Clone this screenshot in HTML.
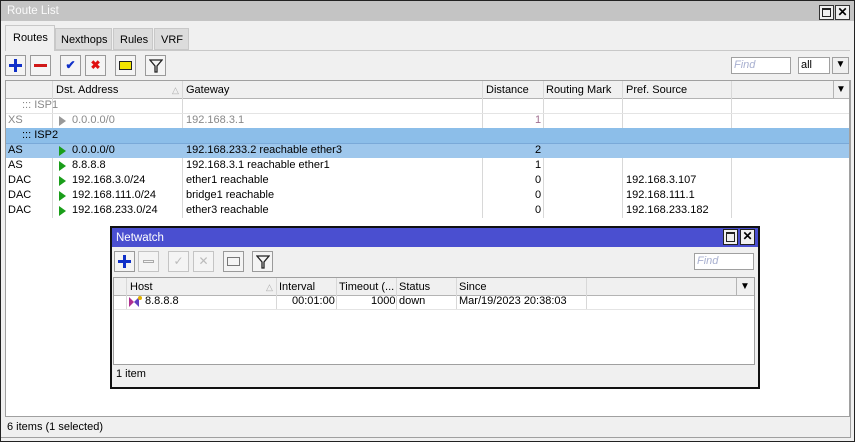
<!DOCTYPE html>
<html><head><style>
*{box-sizing:border-box;margin:0;padding:0}
body{width:855px;height:442px;background:#f0f0f0;font:11px "Liberation Sans",sans-serif;color:#000;position:relative;overflow:hidden}
.a{position:absolute}
.t{position:absolute;white-space:nowrap;line-height:15px}
.btn{position:absolute;width:21px;height:21px;border:1px solid #9a9a9a;background:#f4f4f4}
.hd{position:absolute;height:18px;background:#f0f0f0;border-bottom:1px solid #b4b4b4}
.vl{position:absolute;width:1px;background:#d8d8d8}
.hl{position:absolute;height:1px;background:#e4e4e4}
.tri{position:absolute;width:0;height:0;border-top:5px solid transparent;border-bottom:5px solid transparent;border-left:7px solid #1a9e1a}
</style></head><body>
<div class="a" style="left:0;top:0;width:855px;height:442px;border:1px solid #222"></div>
<div class="a" style="left:1px;top:1px;width:853px;height:20px;background:#c4c4c4"></div>
<div class="t" style="left:7px;top:4px;font-size:11.5px;color:#fafafa">Route List</div>
<div class="a" style="left:819px;top:5px;width:15px;height:15px;border:1px solid #333;background:#f0f0f0"><div class="a" style="left:2px;top:2px;width:9px;height:9px;border:1px solid #222;border-top-width:2px"></div></div>
<div class="a" style="left:835px;top:5px;width:15px;height:15px;border:1px solid #333;background:#f0f0f0;font:bold 12px 'Liberation Sans';text-align:center;line-height:12px">✕</div>
<div class="a" style="left:5px;top:50px;width:845px;height:1px;background:#c8c8c8"></div>
<div class="a" style="left:55px;top:28px;width:57px;height:22px;background:#dcdcdc;border:1px solid #c8c8c8"></div>
<div class="a" style="left:113px;top:28px;width:40px;height:22px;background:#dcdcdc;border:1px solid #c8c8c8"></div>
<div class="a" style="left:154px;top:28px;width:35px;height:22px;background:#dcdcdc;border:1px solid #c8c8c8"></div>
<div class="a" style="left:5px;top:25px;width:50px;height:26px;background:#f0f0f0;border:1px solid #c8c8c8;border-bottom:none"></div>
<div class="t" style="left:13px;top:31px">Routes</div>
<div class="t" style="left:61px;top:33px">Nexthops</div>
<div class="t" style="left:120px;top:33px">Rules</div>
<div class="t" style="left:161px;top:33px">VRF</div>
<div class="btn" style="left:5px;top:55px"><div class="a" style="left:3px;top:8px;width:13px;height:3px;background:#1030c8"></div><div class="a" style="left:8px;top:3px;width:3px;height:13px;background:#1030c8"></div></div>
<div class="btn" style="left:30px;top:55px"><div class="a" style="left:3px;top:8px;width:13px;height:3px;background:#d01818"></div></div>
<div class="btn" style="left:60px;top:55px;color:#1030c8;font-weight:bold;text-align:center;line-height:18px;font-size:12px">✔</div>
<div class="btn" style="left:85px;top:55px;color:#e01010;font-weight:bold;text-align:center;line-height:18px;font-size:12px">✖</div>
<div class="btn" style="left:115px;top:55px"><div class="a" style="left:3px;top:5px;width:13px;height:9px;background:#f2e400;border:1px solid #222"></div></div>
<div class="btn" style="left:145px;top:55px"><svg class="a" style="left:3px;top:3px" width="14" height="14"><path d="M1 1H13L8 7V13H6V7Z" fill="none" stroke="#222" stroke-width="1.3"/></svg></div>
<div class="a" style="left:731px;top:57px;width:60px;height:17px;background:#fff;border:1px solid #a0a0a0"></div>
<div class="t" style="left:734px;top:58px;color:#a8b0d0;font-style:italic">Find</div>
<div class="a" style="left:798px;top:57px;width:32px;height:17px;background:#fff;border:1px solid #a0a0a0"></div>
<div class="t" style="left:801px;top:58px">all</div>
<div class="a" style="left:832px;top:57px;width:17px;height:17px;border:1px solid #a0a0a0;text-align:center;font-size:10px;line-height:14px">▼</div>
<div class="a" style="left:5px;top:80px;width:845px;height:337px;background:#fff;border:1px solid #a0a0a0"></div>
<div class="hd" style="left:6px;top:81px;width:843px"></div>
<div class="vl" style="left:52px;top:81px;height:137px"></div>
<div class="vl" style="left:182px;top:81px;height:137px"></div>
<div class="vl" style="left:482px;top:81px;height:137px"></div>
<div class="vl" style="left:543px;top:81px;height:137px"></div>
<div class="vl" style="left:622px;top:81px;height:137px"></div>
<div class="vl" style="left:731px;top:81px;height:137px"></div>
<div class="vl" style="left:833px;top:81px;height:18px;background:#b4b4b4"></div>
<div class="t" style="left:56px;top:83px">Dst. Address</div>
<div class="t" style="left:172px;top:83px;color:#aaa;font-size:9px">△</div>
<div class="t" style="left:186px;top:83px">Gateway</div>
<div class="t" style="left:486px;top:83px">Distance</div>
<div class="t" style="left:546px;top:83px">Routing Mark</div>
<div class="t" style="left:626px;top:83px">Pref. Source</div>
<div class="t" style="left:836px;top:82px;font-size:10px">▼</div>
<div class="t" style="left:22px;top:98px;color:#888">::: ISP1</div>
<div class="hl" style="left:6px;top:113px;width:843px"></div>
<div class="t" style="left:8px;top:113px;color:#888">XS</div>
<div class="tri" style="left:59px;top:116px;border-left-color:#999"></div>
<div class="t" style="left:72px;top:113px;color:#888">0.0.0.0/0</div>
<div class="t" style="left:186px;top:113px;color:#888">192.168.3.1</div>
<div class="t" style="left:535px;top:113px;color:#a07090">1</div>
<div class="a" style="left:6px;top:128px;width:843px;height:15px;background:#8cbee9"></div>
<div class="t" style="left:22px;top:128px">::: ISP2</div>
<div class="a" style="left:6px;top:143px;width:843px;height:15px;background:#9ec7ec;border-top:1px solid #7aa9d8"></div>
<div class="t" style="left:8px;top:143px">AS</div><div class="tri" style="left:59px;top:146px"></div>
<div class="t" style="left:72px;top:143px">0.0.0.0/0</div>
<div class="t" style="left:186px;top:143px">192.168.233.2 reachable ether3</div>
<div class="t" style="left:535px;top:143px">2</div>
<div class="t" style="left:8px;top:158px">AS</div><div class="tri" style="left:59px;top:161px"></div>
<div class="t" style="left:72px;top:158px">8.8.8.8</div>
<div class="t" style="left:186px;top:158px">192.168.3.1 reachable ether1</div>
<div class="t" style="left:535px;top:158px">1</div>
<div class="t" style="left:8px;top:173px">DAC</div><div class="tri" style="left:59px;top:176px"></div>
<div class="t" style="left:72px;top:173px">192.168.3.0/24</div>
<div class="t" style="left:186px;top:173px">ether1 reachable</div>
<div class="t" style="left:535px;top:173px">0</div>
<div class="t" style="left:626px;top:173px">192.168.3.107</div>
<div class="t" style="left:8px;top:188px">DAC</div><div class="tri" style="left:59px;top:191px"></div>
<div class="t" style="left:72px;top:188px">192.168.111.0/24</div>
<div class="t" style="left:186px;top:188px">bridge1 reachable</div>
<div class="t" style="left:535px;top:188px">0</div>
<div class="t" style="left:626px;top:188px">192.168.111.1</div>
<div class="t" style="left:8px;top:203px">DAC</div><div class="tri" style="left:59px;top:206px"></div>
<div class="t" style="left:72px;top:203px">192.168.233.0/24</div>
<div class="t" style="left:186px;top:203px">ether3 reachable</div>
<div class="t" style="left:535px;top:203px">0</div>
<div class="t" style="left:626px;top:203px">192.168.233.182</div>
<div class="t" style="left:7px;top:420px">6 items (1 selected)</div>
<div class="a" style="left:850px;top:80px;width:1px;height:357px;background:#a0a0a0"></div>
<div class="a" style="left:1px;top:437px;width:850px;height:1px;background:#a0a0a0"></div>

<div class="a" style="left:110px;top:226px;width:650px;height:163px;background:#f0f0f0;border:2px solid #111"></div>
<div class="a" style="left:112px;top:228px;width:646px;height:19px;background:#4a4fd0"></div>
<div class="t" style="left:116px;top:231px;font-size:11.5px;color:#fff">Netwatch</div>
<div class="a" style="left:723px;top:229px;width:15px;height:16px;border:1px solid #222;background:#f0f0f0"><div class="a" style="left:2px;top:2px;width:9px;height:10px;border:1px solid #222;border-top-width:2px"></div></div>
<div class="a" style="left:740px;top:229px;width:15px;height:16px;border:1px solid #222;background:#f0f0f0;font:bold 12px 'Liberation Sans';text-align:center;line-height:13px">✕</div>
<div class="btn" style="left:114px;top:251px"><div class="a" style="left:3px;top:8px;width:13px;height:3px;background:#1030c8"></div><div class="a" style="left:8px;top:3px;width:3px;height:13px;background:#1030c8"></div></div>
<div class="btn" style="left:138px;top:251px;border-color:#c4c4c4"><div class="a" style="left:4px;top:8px;width:11px;height:3px;border:1px solid #aaa"></div></div>
<div class="btn" style="left:168px;top:251px;border-color:#c4c4c4;color:#bbb;text-align:center;line-height:18px;font-size:12px">✓</div>
<div class="btn" style="left:193px;top:251px;border-color:#c4c4c4;color:#bbb;text-align:center;line-height:18px;font-size:12px">✕</div>
<div class="btn" style="left:223px;top:251px"><div class="a" style="left:3px;top:5px;width:13px;height:9px;border:1px solid #777"></div></div>
<div class="btn" style="left:252px;top:251px"><svg class="a" style="left:3px;top:3px" width="14" height="14"><path d="M1 1H13L8 7V13H6V7Z" fill="none" stroke="#222" stroke-width="1.3"/></svg></div>
<div class="a" style="left:694px;top:253px;width:60px;height:17px;background:#fff;border:1px solid #a0a0a0"></div>
<div class="t" style="left:697px;top:254px;color:#a8b0d0;font-style:italic">Find</div>
<div class="a" style="left:113px;top:277px;width:642px;height:88px;background:#fff;border:1px solid #a0a0a0"></div>
<div class="hd" style="left:114px;top:278px;width:640px"></div>
<div class="vl" style="left:126px;top:278px;height:31px"></div>
<div class="vl" style="left:276px;top:278px;height:31px"></div>
<div class="vl" style="left:336px;top:278px;height:31px"></div>
<div class="vl" style="left:396px;top:278px;height:31px"></div>
<div class="vl" style="left:456px;top:278px;height:31px"></div>
<div class="vl" style="left:586px;top:278px;height:31px"></div>
<div class="vl" style="left:736px;top:278px;height:18px;background:#b4b4b4"></div>
<div class="hl" style="left:114px;top:309px;width:640px"></div>
<div class="t" style="left:130px;top:280px">Host</div>
<div class="t" style="left:266px;top:280px;color:#aaa;font-size:9px">△</div>
<div class="t" style="left:279px;top:280px">Interval</div>
<div class="t" style="left:339px;top:280px">Timeout (...</div>
<div class="t" style="left:399px;top:280px">Status</div>
<div class="t" style="left:459px;top:280px">Since</div>
<div class="t" style="left:740px;top:279px;font-size:10px">▼</div>
<svg class="a" style="left:128px;top:295px" width="14" height="13"><path d="M1 2L6 7L1 12Z" fill="#b03090"/><path d="M11 2L6 7L11 12Z" fill="#6040c0"/><circle cx="12" cy="3" r="2" fill="#e0b000"/></svg>
<div class="t" style="left:145px;top:294px">8.8.8.8</div>
<div class="t" style="left:292px;top:294px">00:01:00</div>
<div class="t" style="left:371px;top:294px">1000</div>
<div class="t" style="left:399px;top:294px">down</div>
<div class="t" style="left:459px;top:294px">Mar/19/2023 20:38:03</div>
<div class="t" style="left:116px;top:367px">1 item</div>
</body></html>
